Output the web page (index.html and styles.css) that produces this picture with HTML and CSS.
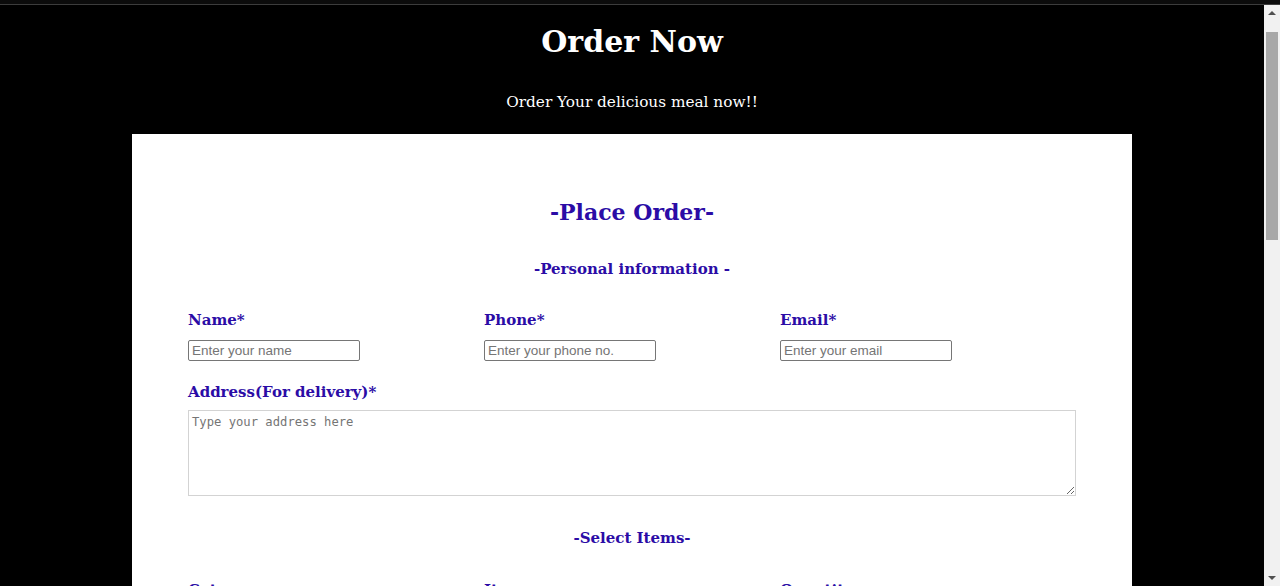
FILE: index.html
```html
<!DOCTYPE html>
<html lang="en">
<head>
<meta charset="utf-8">
<title>Order Now</title>
<link rel="stylesheet" href="styles.css">
</head>
<body>
<div class="topline"></div>
<div class="page">
  <header class="site-header">
    <h1 class="site-title">Order Now</h1>
    <p class="site-sub">Order Your delicious meal now!!</p>
  </header>
  <main class="card">
    <h2 class="card-title">-Place Order-</h2>
    <h3 class="section-title">-Personal information -</h3>
    <div class="grid3">
      <div class="field">
        <label class="label" for="name">Name*</label>
        <input class="input" id="name" type="text" placeholder="Enter your name">
      </div>
      <div class="field">
        <label class="label" for="phone">Phone*</label>
        <input class="input" id="phone" type="text" placeholder="Enter your phone no.">
      </div>
      <div class="field">
        <label class="label" for="email">Email*</label>
        <input class="input" id="email" type="text" placeholder="Enter your email">
      </div>
    </div>
    <div class="field field-wide">
      <label class="label" for="addr">Address(For delivery)*</label>
      <textarea class="area" id="addr" placeholder="Type your address here"></textarea>
    </div>
    <h3 class="section-title section-items">-Select Items-</h3>
    <div class="grid3 grid-items">
      <div class="field">
        <label class="label" for="cat">Category</label>
        <select class="input select" id="cat"><option>Select category</option></select>
      </div>
      <div class="field">
        <label class="label" for="item">Item</label>
        <select class="input select" id="item"><option>Select item</option></select>
      </div>
      <div class="field">
        <label class="label" for="qty">Quantity</label>
        <input class="input" id="qty" type="number" placeholder="1">
      </div>
    </div>
    <h3 class="section-title section-items">-Payment-</h3>
    <div class="grid3 grid-items">
      <div class="field">
        <span class="label">Payment method*</span>
        <label class="radio"><input type="radio" name="pay"> Cash on delivery</label>
        <label class="radio"><input type="radio" name="pay"> Card</label>
        <label class="radio"><input type="radio" name="pay"> UPI</label>
      </div>
      <div class="field">
        <label class="label" for="time">Delivery time</label>
        <input class="input" id="time" type="text" placeholder="hh:mm">
      </div>
      <div class="field">
        <label class="label" for="coupon">Coupon</label>
        <input class="input" id="coupon" type="text" placeholder="Enter coupon code">
      </div>
    </div>
    <div class="field field-wide">
      <label class="label" for="note">Special instructions</label>
      <textarea class="area" id="note" placeholder="Any special request"></textarea>
    </div>
    <div class="actions">
      <button class="btn" type="submit">Place Order</button>
    </div>
  </main>
  <footer class="site-footer">
    <p class="foot-text">Thank you for ordering with us!</p>
  </footer>
</div>
<div class="scrollbar" aria-hidden="true">
  <div class="sb-btn"><span class="sb-up"></span></div>
  <div class="sb-thumb"></div>
  <div class="sb-fill"></div>
  <div class="sb-btn"><span class="sb-down"></span></div>
</div>
</body>
</html>
```
FILE: styles.css
```css
html { background: #000; }
body {
  margin: 0;
  border-top: 4px solid #0b0b0b;
  background: #000;
  color: #fff;
  font-family: "DejaVu Serif", Georgia, serif;
}
.topline { height: 1px; background: #3c3c3c; }
.page { margin-right: 16px; }
.site-header {
  text-align: center;
  padding-top: 19px;
  padding-bottom: 22px;
}
.site-title {
  margin: 0;
  font-size: 30px;
  font-weight: bold;
  line-height: 36px;
}
.site-sub {
  margin: 32px 0 0;
  font-size: 15.3px;
  line-height: 20px;
}
.card {
  width: 1000px;
  box-sizing: border-box;
  margin: 0 auto;
  background: #fff;
  padding: 64px 56px 60px;
  color: #2b0ca6;
}
.card-title {
  margin: 0;
  text-align: center;
  font-size: 22px;
  line-height: 28px;
}
.section-title {
  margin: 33px 0 0;
  text-align: center;
  font-size: 15px;
  line-height: 20px;
}
.section-items { margin-top: 32px; }
.grid3 {
  display: grid;
  grid-template-columns: repeat(3, 1fr);
  margin-top: 31px;
}
.grid-items { margin-top: 32px; }
.field { display: flex; flex-direction: column; align-items: flex-start; }
.field-wide { margin-top: 21px; }
.label {
  font-size: 15px;
  font-weight: bold;
  line-height: 20px;
  margin-bottom: 10px;
}
.field-wide .label { margin-bottom: 8px; }
.input {
  width: 172px;
  height: 21px;
  box-sizing: border-box;
  border: 1px solid #767676;
  border-radius: 2px;
  padding: 1px 3px;
  font-family: "Liberation Sans", Arial, sans-serif;
  font-size: 13.5px;
  color: #000;
  background: #fff;
}
.input::placeholder { color: #757575; }
.area {
  width: 888px;
  height: 86px;
  box-sizing: border-box;
  border: 1px solid #d3d3d3;
  padding: 4px 3px 2px;
  font-family: "DejaVu Sans Mono", monospace;
  font-size: 12.2px;
  resize: vertical;
}
.area::placeholder { color: #757575; }
.radio {
  font-family: "Liberation Sans", Arial, sans-serif;
  font-size: 14px;
  color: #222;
  margin-top: 4px;
}
.actions { display: flex; justify-content: center; margin-top: 40px; }
.btn {
  background: #2b0ca6;
  color: #fff;
  border: 0;
  padding: 10px 28px;
  font-family: "DejaVu Serif", Georgia, serif;
  font-size: 16px;
  font-weight: bold;
}
.site-footer { text-align: center; padding: 30px 0 200px; }
.foot-text { margin: 0; font-size: 14px; }

/* imitation of the browser scrollbar visible in the screenshot */
.scrollbar {
  position: fixed;
  top: 5px;
  right: 0;
  bottom: 0;
  width: 16px;
  background: #f1f1f1;
  display: flex;
  flex-direction: column;
  align-items: center;
}
.sb-btn {
  width: 16px;
  height: 16px;
  display: flex;
  align-items: center;
  justify-content: center;
  flex: none;
}
.sb-up {
  width: 0; height: 0;
  border-left: 4px solid transparent;
  border-right: 4px solid transparent;
  border-bottom: 4px solid #505050;
}
.sb-down {
  width: 0; height: 0;
  border-left: 4px solid transparent;
  border-right: 4px solid transparent;
  border-top: 4px solid #505050;
}
.sb-thumb {
  margin-top: 11px;
  width: 12px;
  height: 208px;
  background: #a8a8a8;
  flex: none;
}
.sb-fill { flex: 1; }
```
